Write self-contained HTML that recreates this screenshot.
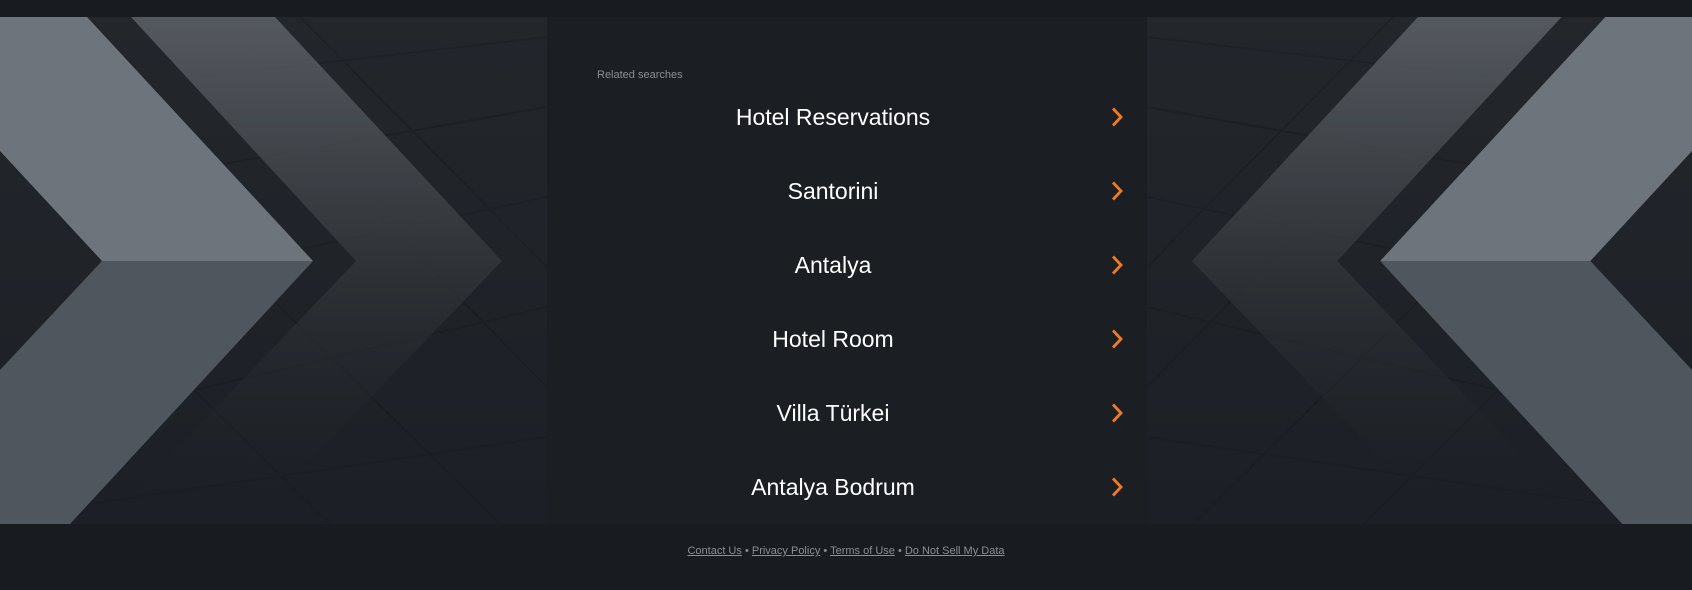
<!DOCTYPE html>
<html><head><meta charset="utf-8"><style>
html,body{margin:0;padding:0;width:1692px;height:590px;background:#181c20;overflow:hidden;font-family:"Liberation Sans",sans-serif}
.art{position:absolute;top:17px;height:507px;width:547px}
#l{left:0}
#r{left:1147px;width:545px}
.panel{position:absolute;left:547px;top:17px;width:600px;height:507px;background:#1b1f23}
.rel{position:absolute;left:50px;top:52px;font-size:11px;color:#8b8f94}
.item{position:absolute;left:0;width:572px;text-align:center;font-size:23px;color:#fff;line-height:30px}
.arr{position:absolute;left:564px;width:12px;height:20px}
.foot{position:absolute;top:545px;left:0;width:1692px;text-align:center;font-size:11px;color:#8b8f94}
.foot a{color:#8b8f94;text-decoration:underline}
</style></head><body>
<svg class="art" id="l" viewBox="0 0 547 507" preserveAspectRatio="none">
<defs>
<linearGradient id="bg" x1="0" y1="0" x2="0" y2="1"><stop offset="0" stop-color="#23272c"/><stop offset="1" stop-color="#1c2026"/></linearGradient>
<linearGradient id="g2" x1="0" y1="0" x2="0" y2="1"><stop offset="0" stop-color="#5d6268"/><stop offset="0.5" stop-color="#33373c"/><stop offset="1" stop-color="#1f2328" stop-opacity="0"/></linearGradient>
</defs>
<rect width="547" height="507" fill="url(#bg)"/>
<g stroke="#15181c" stroke-width="2" opacity="0.35" fill="none">
<path d="M200 60 L547 20 M150 160 L547 90 M120 270 L547 180 M80 400 L547 290 M0 500 L547 420"/>
<path d="M300 0 L547 250 M380 200 L547 370 M250 260 L500 507 M120 300 L330 507"/>
</g>
<polygon points="131,0 275,0 502,244 275,480 131,480 356,244" fill="url(#g2)" opacity="0.85"/>
<polygon points="0,0 87,0 313,244 102,244 0,134" fill="#6e747b"/>
<polygon points="102,244 313,244 70,507 0,507 0,353" fill="#50565d"/>
</svg>
<svg class="art" id="r" viewBox="0 0 547 507" preserveAspectRatio="none" style="transform:scaleX(-1)">
<defs>
<linearGradient id="bgr" x1="0" y1="0" x2="0" y2="1"><stop offset="0" stop-color="#23272c"/><stop offset="1" stop-color="#1c2026"/></linearGradient>
<linearGradient id="g2r" x1="0" y1="0" x2="0" y2="1"><stop offset="0" stop-color="#5d6268"/><stop offset="0.5" stop-color="#33373c"/><stop offset="1" stop-color="#1f2328" stop-opacity="0"/></linearGradient>
</defs>
<rect width="547" height="507" fill="url(#bgr)"/>
<g stroke="#15181c" stroke-width="2" opacity="0.35" fill="none">
<path d="M200 60 L547 20 M150 160 L547 90 M120 270 L547 180 M80 400 L547 290 M0 500 L547 420"/>
<path d="M300 0 L547 250 M380 200 L547 370 M250 260 L500 507 M120 300 L330 507"/>
</g>
<polygon points="131,0 275,0 502,244 275,480 131,480 356,244" fill="url(#g2r)" opacity="0.85"/>
<polygon points="0,0 87,0 313,244 102,244 0,134" fill="#6e747b"/>
<polygon points="102,244 313,244 70,507 0,507 0,353" fill="#50565d"/>
</svg>
<div class="panel">
<div class="rel">Related searches</div>
<div class="item" style="top:85px">Hotel Reservations</div>
<div class="item" style="top:159px">Santorini</div>
<div class="item" style="top:233px">Antalya</div>
<div class="item" style="top:307px">Hotel Room</div>
<div class="item" style="top:381px">Villa Türkei</div>
<div class="item" style="top:455px">Antalya Bodrum</div>
<svg class="arr" style="top:90px" viewBox="0 0 12 20"><path d="M2 1.5 L10 10 L2 18.5" stroke="#f47a20" stroke-width="2.8" fill="none"/></svg>
<svg class="arr" style="top:164px" viewBox="0 0 12 20"><path d="M2 1.5 L10 10 L2 18.5" stroke="#f47a20" stroke-width="2.8" fill="none"/></svg>
<svg class="arr" style="top:238px" viewBox="0 0 12 20"><path d="M2 1.5 L10 10 L2 18.5" stroke="#f47a20" stroke-width="2.8" fill="none"/></svg>
<svg class="arr" style="top:312px" viewBox="0 0 12 20"><path d="M2 1.5 L10 10 L2 18.5" stroke="#f47a20" stroke-width="2.8" fill="none"/></svg>
<svg class="arr" style="top:386px" viewBox="0 0 12 20"><path d="M2 1.5 L10 10 L2 18.5" stroke="#f47a20" stroke-width="2.8" fill="none"/></svg>
<svg class="arr" style="top:460px" viewBox="0 0 12 20"><path d="M2 1.5 L10 10 L2 18.5" stroke="#f47a20" stroke-width="2.8" fill="none"/></svg>
</div>
<div class="foot"><a>Contact Us</a> • <a>Privacy Policy</a> • <a>Terms of Use</a> • <a>Do Not Sell My Data</a></div>
</body></html>
